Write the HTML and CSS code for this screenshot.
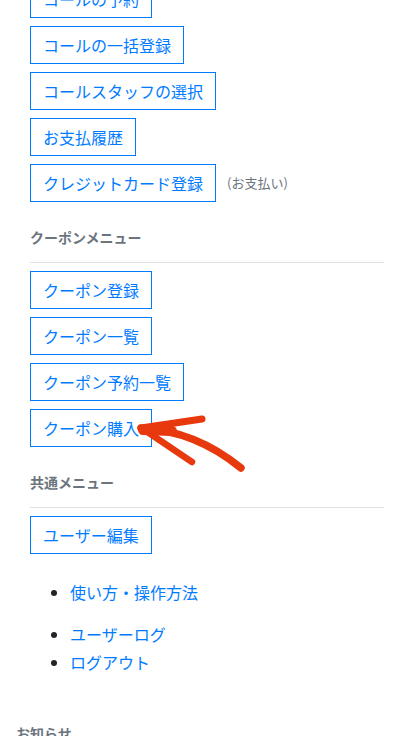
FILE: index.html
```html
<!DOCTYPE html>
<html lang="ja">
<head>
<meta charset="utf-8">
<title>メニュー</title>
<link rel="stylesheet" href="styles.css">
</head>
<body>
<div class="page">
  <div class="menu">
    <div class="row"><a class="btn">コールの予約</a></div>
    <div class="row"><a class="btn">コールの一括登録</a></div>
    <div class="row"><a class="btn">コールスタッフの選択</a></div>
    <div class="row"><a class="btn">お支払履歴</a></div>
    <div class="row"><a class="btn">クレジットカード登録</a><span class="note">(お支払い)</span></div>

    <h6 class="heading">クーポンメニュー</h6>
    <hr class="rule">
    <div class="row"><a class="btn">クーポン登録</a></div>
    <div class="row"><a class="btn">クーポン一覧</a></div>
    <div class="row"><a class="btn">クーポン予約一覧</a></div>
    <div class="row"><a class="btn">クーポン購入</a></div>

    <h6 class="heading">共通メニュー</h6>
    <hr class="rule">
    <div class="row"><a class="btn">ユーザー編集</a></div>

    <ul class="links links-first">
      <li><a class="link">使い方・操作方法</a></li>
    </ul>
    <ul class="links links-second">
      <li><a class="link">ユーザーログ</a></li>
      <li><a class="link">ログアウト</a></li>
    </ul>
  </div>
  <h6 class="heading news">お知らせ</h6>
</div>
<svg class="arrow" width="120" height="80" viewBox="0 0 120 80" aria-hidden="true">
  <g fill="none" stroke="#e8380e" stroke-linecap="round" stroke-linejoin="round">
    <path d="M11,28 C 50,30 84,46 111,68" stroke-width="7.5"/>
    <path d="M11,28 L 72,19" stroke-width="7"/>
    <path d="M13,30 L 42,31" stroke-width="10"/>
    <path d="M16,31 L 62,62" stroke-width="6.5"/>
  </g>
</svg>
</body>
</html>
```

FILE: styles.css
```css
html, body {
  margin: 0;
  padding: 0;
  background: #ffffff;
}

body {
  position: relative;
  font-family: "Noto Sans CJK JP", "Noto Sans", sans-serif;
  font-size: 16px;
  line-height: 24px;
  color: #212529;
  overflow: hidden;
  height: 736px;
}

.page {
  margin-top: -20px;
  padding: 0 16px;
}

.menu {
  padding: 0 14px;
}

.row {
  display: flex;
  align-items: center;
  margin-bottom: 8px;
}

.btn {
  display: inline-block;
  border: 1px solid #007bff;
  color: #007bff;
  padding: 6px 12px;
  font-size: 16px;
  line-height: 24px;
  text-decoration: none;
  white-space: nowrap;
}

.note {
  margin-left: 11px;
  font-size: 13px;
  color: #6c757d;
}

.heading {
  margin: 24px 0 0;
  font-size: 14px;
  line-height: 22px;
  font-weight: 700;
  color: #6c757d;
}

.rule {
  margin: 14px 0 8px;
  border: 0;
  border-top: 1px solid #dee2e6;
  height: 0;
}

.links {
  margin: 0;
  padding-left: 40px;
  line-height: 28px;
}

.links-first {
  margin-top: 24px;
}

.links-second {
  margin-top: 14px;
}

.link {
  color: #007bff;
  text-decoration: none;
}

.news {
  margin-top: 46px;
}

.arrow {
  position: absolute;
  top: 400px;
  left: 130px;
}
```
